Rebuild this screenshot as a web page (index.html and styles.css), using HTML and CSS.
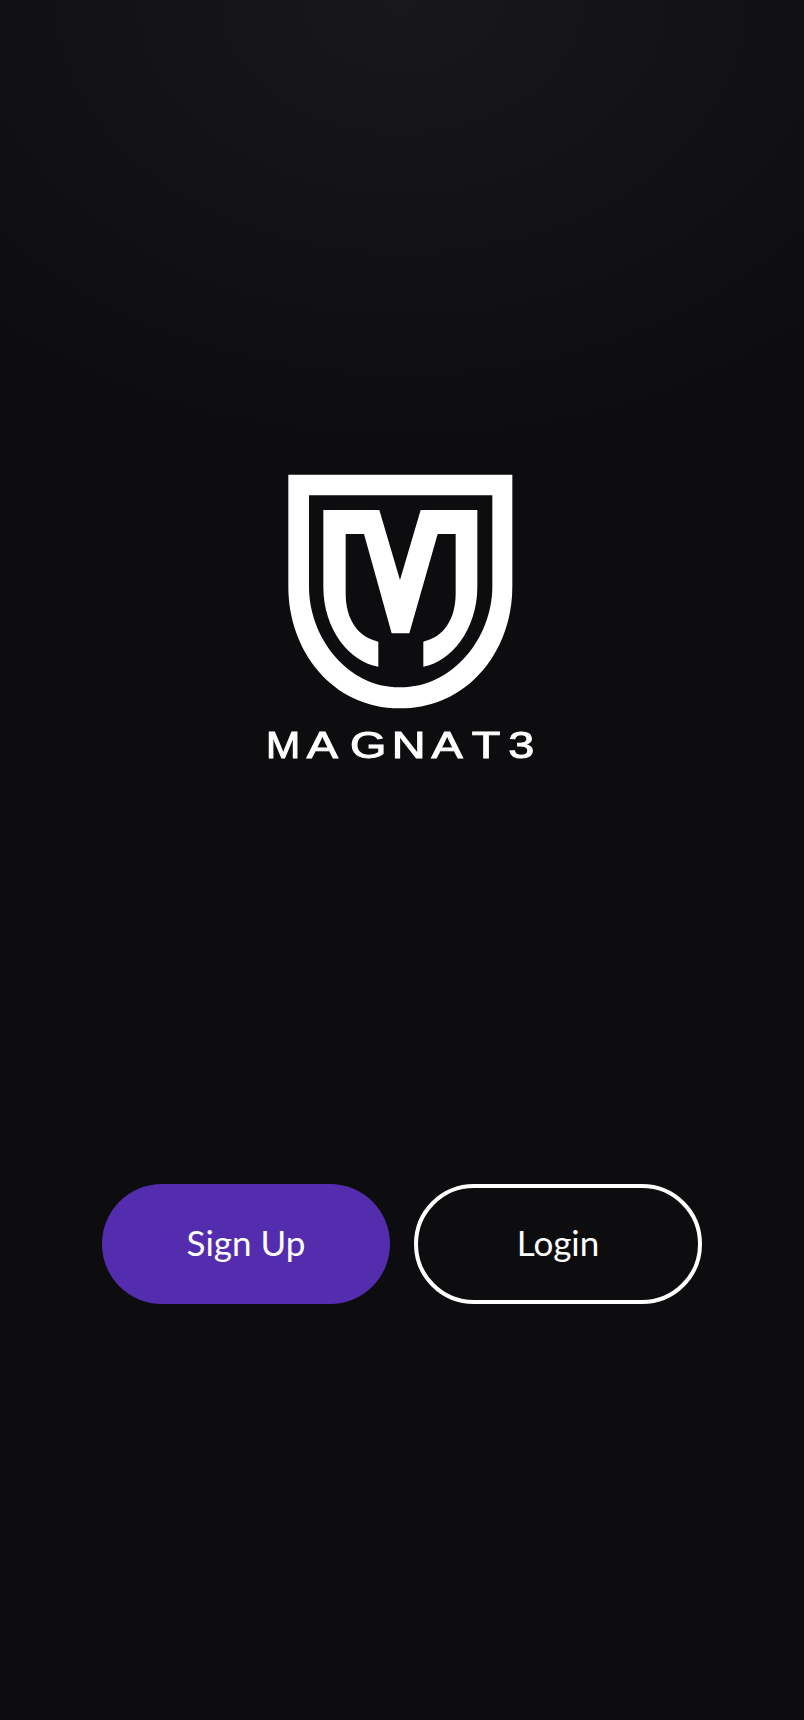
FILE: index.html
```html
<!DOCTYPE html>
<html lang="en">
<head>
<meta charset="utf-8">
<title>Magnat3</title>
<link rel="stylesheet" href="styles.css">
</head>
<body>
<main class="screen">
  <svg class="logo" viewBox="6 0 900 930" role="img" aria-label="Magnat3 logo">
    <path class="logo-mark" fill-rule="evenodd" d="M115 44H787V380C787 570 657 745 450 745C245 745 115 570 115 380ZM177 106V380C177 530 290 682 450 682C612 682 727 530 727 380V106Z"/>
    <path class="logo-mark" d="M220 150H388L450 360L512 150H682V380C682 510 602 605 520 620V545C580 532 617 480 617 400V222H563L478 520H425L342 222H287V400C287 480 325 532 385 545V620C300 605 220 510 220 380Z"/>
    <text class="wordmark" y="894"><tspan x="37" textLength="79" lengthAdjust="spacingAndGlyphs">M</tspan><tspan x="131 231 327 419 512 596">AGNAT3</tspan></text>
  </svg>
  <div class="actions">
    <a class="btn btn-primary" href="#">Sign Up</a>
    <a class="btn btn-outline" href="#">Login</a>
  </div>
</main>
</body>
</html>
```
FILE: styles.css
```css
* { box-sizing: border-box; }
html, body { margin: 0; padding: 0; }
body {
  background: #0d0d0f;
  font-family: "Lato", "Liberation Sans", sans-serif;
}
.screen {
  height: 1720px;
  padding-top: 460px;
  display: flex;
  flex-direction: column;
  align-items: center;
  background: radial-gradient(ellipse 600px 440px at 50% 0, #18181a 0%, #0d0d0f 100%);
}
.logo { width: 300px; height: 310px; display: block; }
.logo-mark { fill: #fff; }
.wordmark {
  fill: #fff;
  stroke: #fff;
  stroke-width: 3px;
  font-family: "Liberation Sans", sans-serif;
  font-size: 108px;
  transform: scaleX(1.3);
  filter: blur(0.4px);
}
.actions {
  margin-top: 414px;
  display: flex;
  gap: 24px;
}
.btn {
  width: 288px;
  height: 120px;
  border-radius: 60px;
  display: flex;
  align-items: center;
  justify-content: center;
  color: #fff;
  font-size: 35px;
  text-decoration: none;
  padding-bottom: 4px;
}
.btn-primary { background: #532dae; }
.btn-outline { border: 4px solid #fff; }
```
